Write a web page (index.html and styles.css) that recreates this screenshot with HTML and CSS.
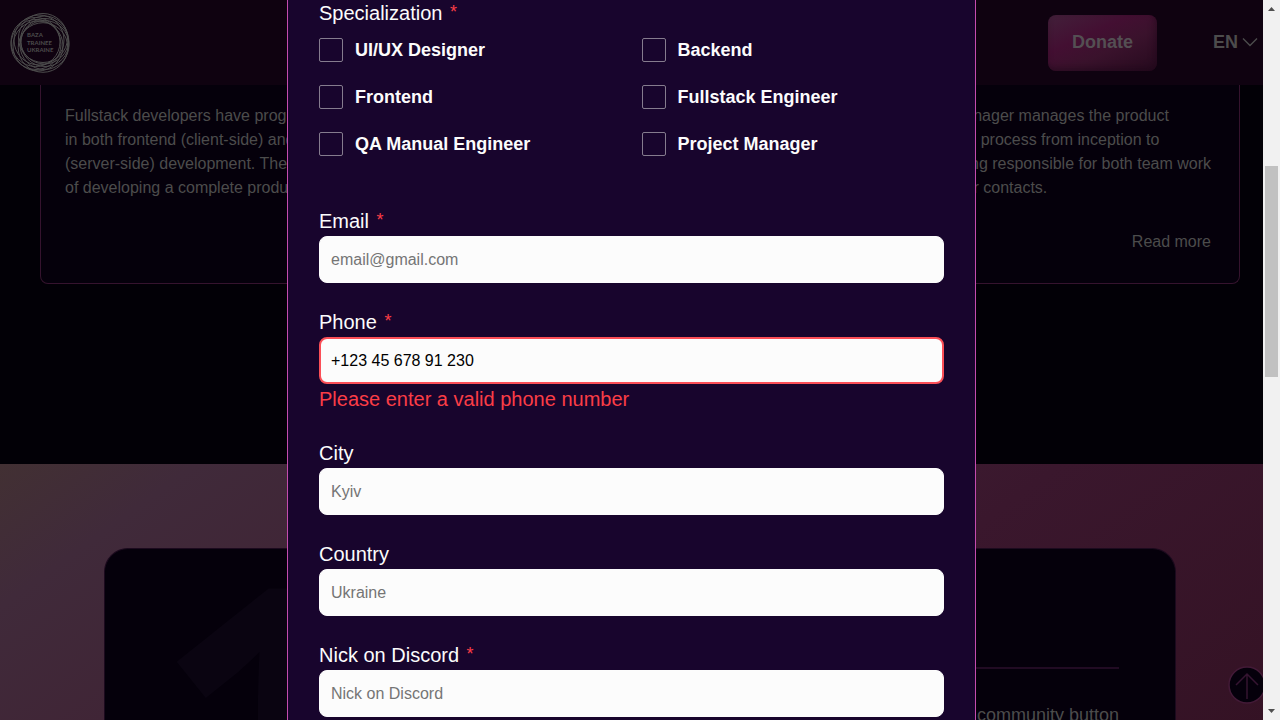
FILE: index.html
```html
<!DOCTYPE html>
<html lang="en">
<head>
<meta charset="utf-8">
<meta name="viewport" content="width=device-width, initial-scale=1">
<title>Baza Trainee Ukraine</title>
<link rel="stylesheet" href="styles.css">
</head>
<body>
<div class="page">
  <header class="header">
    <a class="logo" href="#" aria-label="Baza Trainee Ukraine">
      <svg viewBox="0 0 60 60" width="60" height="60">
        <g fill="none" stroke="currentColor" stroke-width="1">
          <circle cx="33" cy="25" r="24.500"/>
          <circle cx="34.500" cy="27" r="24"/>
          <circle cx="35" cy="29.500" r="24"/>
          <circle cx="34.500" cy="32" r="24.500"/>
          <circle cx="33" cy="34.500" r="24.800"/>
          <circle cx="28" cy="33" r="25"/>
          <circle cx="26" cy="31.500" r="25"/>
          <circle cx="25.500" cy="29" r="24.500"/>
          <circle cx="29" cy="27" r="25"/>
        </g>
        <g class="logo-text">
          <text x="17" y="24">BAZA</text>
          <text x="17" y="32">TRAINEE</text>
          <text x="17" y="39">UKRAINE</text>
        </g>
      </svg>
    </a>
    <div class="header-actions">
      <button class="donate" type="button">Donate</button>
      <button class="lang" type="button">EN
        <svg viewBox="0 0 16 10" width="16" height="10"><path d="M1 1.5 8 8.5 15 1.5" fill="none" stroke="currentColor" stroke-width="1.4"/></svg>
      </button>
    </div>
  </header>

  <section class="roles">
    <article class="card">
      <p>Fullstack developers have programming skills<br>in both frontend (client-side) and backend<br>(server-side) development. They are capable<br>of developing a complete product.</p>
      <a class="more" href="#">Read more</a>
    </article>
    <article class="card"></article>
    <article class="card">
      <p>IT project manager manages the product<br>development, process from inception to<br>shipping, being responsible for both team work<br>with customer contacts.</p>
      <a class="more" href="#">Read more</a>
    </article>
  </section>

  <section class="steps">
    <div class="step">
      <div class="step-number">1</div>
      <div class="step-body">
        <p>Click on the community button</p>
      </div>
    </div>
  </section>

  <button class="to-top" type="button" aria-label="Back to top">
    <svg viewBox="0 0 38 38" width="38" height="38">
      <circle cx="19" cy="19" r="18" fill="#05000b" stroke="#431a37" stroke-width="1.5"/>
      <path d="M19 33V8M8 19 19 8l11 11" fill="none" stroke="#351431" stroke-width="1.5"/>
    </svg>
  </button>
</div>

<div class="overlay">
  <div class="overlay-view">
    <form class="dialog" role="dialog" aria-label="Registration">
      <fieldset class="spec">
        <legend>Specialization <span class="req">*</span></legend>
        <div class="options">
          <label class="option"><input type="checkbox">UI/UX Designer</label>
          <label class="option"><input type="checkbox">Backend</label>
          <label class="option"><input type="checkbox">Frontend</label>
          <label class="option"><input type="checkbox">Fullstack Engineer</label>
          <label class="option"><input type="checkbox">QA Manual Engineer</label>
          <label class="option"><input type="checkbox">Project Manager</label>
        </div>
      </fieldset>
      <div class="field">
        <label for="email">Email <span class="req">*</span></label>
        <input id="email" type="email" placeholder="email@gmail.com">
      </div>
      <div class="field invalid">
        <label for="phone">Phone <span class="req">*</span></label>
        <input id="phone" type="tel" value="+123 45 678 91 230" aria-describedby="phone-error">
        <p class="error" id="phone-error">Please enter a valid phone number</p>
      </div>
      <div class="field">
        <label for="city">City</label>
        <input id="city" type="text" placeholder="Kyiv">
      </div>
      <div class="field">
        <label for="country">Country</label>
        <input id="country" type="text" placeholder="Ukraine">
      </div>
      <div class="field">
        <label for="discord">Nick on Discord <span class="req">*</span></label>
        <input id="discord" type="text" placeholder="Nick on Discord">
      </div>
    </form>
  </div>
  <div class="scrollbar" aria-hidden="true">
    <svg viewBox="0 0 17 17" width="17" height="17"><path d="M5 11 8.500 7l3.500 4z" fill="#505050"/></svg>
    <div class="track"><div class="thumb"></div></div>
    <svg viewBox="0 0 17 17" width="17" height="17"><path d="M5 6 8.500 10 12 6z" fill="#505050"/></svg>
  </div>
</div>
</body>
</html>
```

FILE: styles.css
```css
* {
  box-sizing: border-box;
}

body {
  margin: 0;
  background: #020006;
  color: #4c4c4c;
  font: 16px/24px "Liberation Sans", Arial, sans-serif;
}

p {
  margin: 0;
}

a {
  color: inherit;
  text-decoration: none;
}

button,
input {
  font: inherit;
}

.page {
  position: relative;
  display: flex;
  flex-direction: column;
  height: 100vh;
  overflow: hidden;
}

/* Header */
.header {
  display: flex;
  flex: none;
  align-items: center;
  justify-content: space-between;
  height: 85px;
  padding: 0 22px 0 10px;
  background: #0f0210;
}

.logo,
.logo svg {
  display: block;
}

.logo-text {
  fill: currentColor;
  font-size: 6px;
  font-family: Lato, sans-serif;
  font-weight: 700;
}

.header-actions {
  display: flex;
  align-items: center;
  gap: 56px;
}

.donate {
  height: 56px;
  padding: 0 24px 2px;
  border: 0;
  border-radius: 8px;
  background: linear-gradient(155deg, #42203a 0%, #430f32 36%, #3a122c 60%, #260a1e 100%);
  box-shadow: inset -2px -3px 6px #1c061780;
  color: #544f53;
  font-size: 18px;
  font-weight: 700;
}

.lang {
  display: flex;
  align-items: center;
  gap: 4px;
  padding: 0 0 2px;
  border: 0;
  background: none;
  color: #4c4c4c;
  font-size: 18px;
  font-weight: 700;
}

/* Role cards */
.roles {
  display: grid;
  grid-template-columns: repeat(3, 1fr);
  gap: 24px;
  padding: 0 40px 180px;
}

.card {
  display: flex;
  flex-direction: column;
  justify-content: space-between;
  gap: 30px;
  padding: 19px 28px 29px 24px;
  border: 1px solid #35132e;
  border-top: 0;
  border-radius: 0 0 8px 8px;
  background: #05000b;
  white-space: nowrap;
}

.more {
  align-self: flex-end;
}

/* Steps */
.steps {
  display: flex;
  flex: 1;
  min-height: 0;
  padding: 84px 104px 0;
  background: linear-gradient(144deg, #423033 0%, #402a3a 12%, #402536 28%, #3a172d 65%, #341224 100%);
}

.step {
  display: flex;
  flex: 1;
  justify-content: space-between;
  padding: 0 56px 0 48px;
  overflow: hidden;
  border: 1px solid #1c0a1e;
  border-bottom: 0;
  border-radius: 24px 24px 0 0;
  background: #05000b;
}

.step-number {
  padding-top: 10px;
  color: #0a0411;
  font: 700 400px/320px "Open Sans", sans-serif;
}

.step-body {
  flex: none;
  width: 50%;
  padding-top: 118px;
  font-size: 18px;
  text-align: right;
}

.step-body p {
  padding-top: 34px;
  border-top: 2px solid #210b23;
  white-space: nowrap;
}

.to-top {
  position: absolute;
  right: 14px;
  bottom: 16px;
  padding: 0;
  border: 0;
  background: none;
}

.to-top svg {
  display: block;
}

/* Dialog over the page */
.overlay {
  position: absolute;
  inset: 0;
  display: flex;
  overflow: hidden;
}

.overlay-view {
  display: flex;
  flex: 1;
  justify-content: center;
}

.dialog {
  display: flex;
  flex-direction: column;
  gap: 24px;
  width: 100%;
  max-width: 689px;
  padding: 0 31px;
  border: solid #c44cae;
  border-width: 0 1px;
  background: #18052d;
  color: #fcfcfc;
}

.spec {
  min-width: 0;
  margin: 0 0 26px;
  padding: 0;
  border: 0;
}

.spec legend {
  padding: 0;
  font-size: 20px;
  line-height: 26px;
}

.req {
  margin-left: 2px;
  color: #fb3d46;
  font-size: 18px;
  line-height: 1;
  vertical-align: 2px;
}

.options {
  display: grid;
  grid-template-columns: 1fr 1fr;
  gap: 23px 20px;
  padding-top: 12px;
}

.option {
  display: flex;
  align-items: center;
  gap: 12px;
  font-size: 18px;
  font-weight: 700;
}

.option input {
  width: 24px;
  height: 24px;
  margin: 0;
  appearance: none;
  border: 1px solid #857c8e;
  border-radius: 2px;
}

.field {
  display: flex;
  flex-direction: column;
}

.field label,
.error {
  font-size: 20px;
  line-height: 30px;
}

.field input {
  width: 100%;
  height: 47px;
  padding: 0 11px;
  border: 1px solid #fcfcfc;
  border-radius: 8px;
  outline: 0;
  background: #fcfcfc;
  color: #000;
}

.field input::placeholder {
  color: #757575;
}

.field.invalid input {
  padding: 0 10px;
  border: 2px solid #fb4f57;
}

.error {
  color: #fb3d46;
}

/* Scrollbar of the overlay */
.scrollbar {
  display: flex;
  flex: none;
  flex-direction: column;
  width: 17px;
  background: #f1f1f1;
}

.track {
  display: grid;
  flex: 1;
  grid-template-rows: 149fr 211fr 326fr;
  padding: 0 2px;
}

.thumb {
  grid-row: 2;
  background: #c1c1c1;
}
```
